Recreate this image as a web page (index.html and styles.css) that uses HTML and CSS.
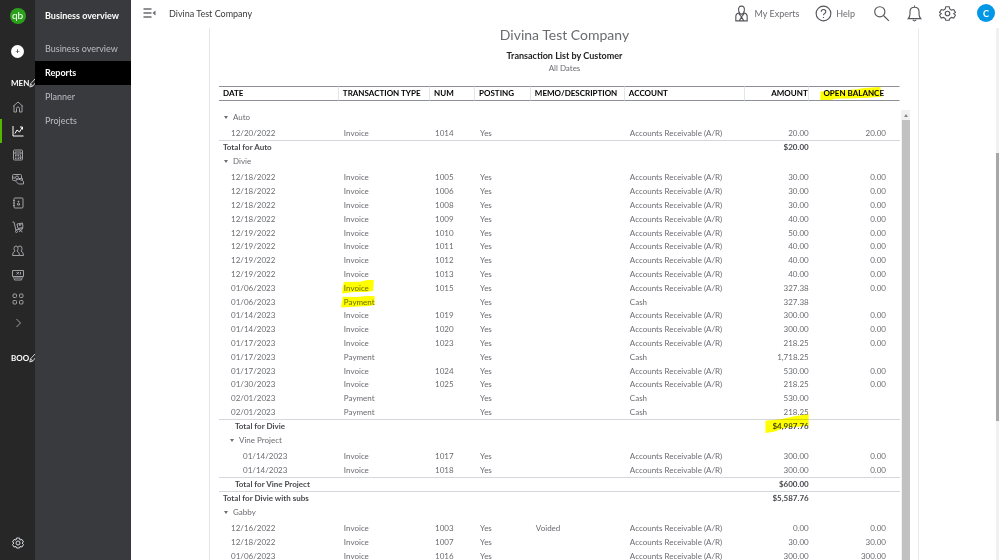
FILE: index.html
```html
<!DOCTYPE html>
<html lang="en">
<head>
    <meta charset="UTF-8">
    <meta name="viewport" content="width=device-width, initial-scale=1.0">
    <title>Transaction List by Customer</title>
    <link rel="stylesheet" href="styles.css">
</head>
<body>

    <nav class="rail" aria-label="Main">
        <a class="logo" href="#"><span>qb</span></a>
        <button class="new-button" type="button" aria-label="New"><span>+</span></button>
        <div class="rail-heading">MEN
            <svg class="pen" viewBox="0 0 20 24"><path d="M2 22l2-8L15 2q2-1 4 1t0 5L9 20zM4 14l5 6"/></svg>
        </div>
        <a class="rail-item" href="#" aria-label="Home">
            <svg viewBox="0 0 24 24"><path d="M2 11L12 2l10 9M4 9v13h5v-7q0-3 3-3t3 3v7h5V9"/></svg>
        </a>
        <a class="rail-item active" href="#" aria-label="Business overview">
            <svg viewBox="0 0 24 24"><path d="M2 2v20h21M6 17l4-7 5 4 6-10M16 4h5v5"/></svg>
        </a>
        <a class="rail-item" href="#" aria-label="Accounting">
            <svg viewBox="0 0 24 24"><rect x="3" y="2" width="18" height="20" rx="2"/><path d="M6 6h12v4H6zM6 13h3M11 13h3M16 13h2M6 16h3M11 16h3M16 16h2M6 19h3M11 19h3M16 15v4h2v-4"/></svg>
        </a>
        <a class="rail-item" href="#" aria-label="Transactions">
            <svg viewBox="0 0 24 24"><path d="M7 15H3q-2 0-2-2V5q0-2 2-2h14q2 0 2 2v5"/><circle cx="10" cy="9" r="3"/><path d="M4 7v5M8 14l4-2 9 3q2 1 2 3v4H13l-5-5zM14 11h7v4"/></svg>
        </a>
        <a class="rail-item" href="#" aria-label="Expenses">
            <svg viewBox="0 0 24 24"><rect x="4" y="2" width="18" height="20" rx="2"/><path d="M2 7h4M2 12h4M2 17h4M13 8v2M11 16q-1-4 2-4t2 4z"/><circle cx="13" cy="9" r="1"/></svg>
        </a>
        <a class="rail-item" href="#" aria-label="Commerce">
            <svg viewBox="0 0 24 24"><path d="M1 2h3l4 17M7 18l15-3M10 6l11-2 1 9-10 2zM15 5v4l3-1V5"/><circle cx="9" cy="21" r="2"/><path d="M14 17l7 5M21 16l-7 6"/></svg>
        </a>
        <a class="rail-item" href="#" aria-label="Customers">
            <svg viewBox="0 0 24 24"><path d="M4 7q0-5 4-5t4 5q0 3-2 5 5 2 5 9H1q0-7 5-9-2-2-2-5zM12 4q2-2 4-2 4 0 4 5 0 3-2 5 5 2 5 9h-8"/></svg>
        </a>
        <a class="rail-item" href="#" aria-label="Payroll">
            <svg viewBox="0 0 24 24"><path d="M1 15V3h22v12zM3 15l2 7h14l2-7M6 18h12"/><path d="M9 6l5 5M14 6l-5 5M17 6v5"/></svg>
        </a>
        <a class="rail-item" href="#" aria-label="Apps">
            <svg viewBox="0 0 24 24"><rect x="2" y="2" width="7" height="7" rx="2"/><rect x="15" y="2" width="7" height="7" rx="2"/><rect x="2" y="15" width="7" height="7" rx="2"/><rect x="15" y="15" width="7" height="7" rx="2"/></svg>
        </a>
        <a class="rail-item" href="#" aria-label="More">
            <svg viewBox="0 0 24 24"><path d="M9 4l8 8-8 8"/></svg>
        </a>
        <div class="rail-heading bookmarks">BOO
            <svg class="pen" viewBox="0 0 20 24"><path d="M2 22l2-8L15 2q2-1 4 1t0 5L9 20zM4 14l5 6"/></svg>
        </div>
        <a class="rail-item settings" href="#" aria-label="Menu settings">
            <svg viewBox="0 0 24 24"><path d="M9 2h6l1 4 4-1 3 5-3 2 3 3-3 5-4-1-1 3H9l-1-3-4 1-3-5 3-3-3-2 3-5 4 1z"/><circle cx="12" cy="12" r="4"/></svg>
        </a>
    </nav>

    <nav class="subnav" aria-label="Business overview">
        <h2>Business overview</h2>
        <a href="#">Business overview</a>
        <a class="current" href="#">Reports</a>
        <a href="#">Planner</a>
        <a href="#">Projects</a>
    </nav>

    <div class="page">
        <header class="topbar">
            <button class="menu-toggle" type="button" aria-label="Collapse menu">
                <svg viewBox="0 0 26 20"><path d="M1 2h16M1 10h16M1 18h16"/><path class="solid" d="M25 5v10l-6-5z"/></svg>
            </button>
            <span class="company">Divina Test Company</span>
            <div class="tools">
                <button class="experts" type="button">
                    <svg viewBox="0 0 24 30"><path d="M7 10q-1-8 5-8t5 8q-1 6-5 6t-5-6zM7 14q-5 1-5 6v8h20v-8q0-5-5-6M7 15l5 6 5-6M8 28l4-7 4 7"/></svg>
                    My Experts
                </button>
                <button class="help" type="button">
                    <svg viewBox="0 0 30 30"><circle cx="15" cy="15" r="13"/><path d="M11 12q0-4 4-4t4 4q0 2-2 3t-2 3M15 21v2"/></svg>
                    Help
                </button>
                <button type="button" aria-label="Search">
                    <svg viewBox="0 0 30 30"><circle cx="12" cy="12" r="9"/><path d="M19 19l9 9"/></svg>
                </button>
                <button type="button" aria-label="Notifications">
                    <svg viewBox="0 0 30 30"><path d="M4 24q3-3 3-8v-4q0-8 8-8t8 8v4q0 5 3 8zM15 1v3M12 26q3 4 6 0"/></svg>
                </button>
                <button type="button" aria-label="Settings">
                    <svg viewBox="0 0 30 30"><path d="M12 3h6l1 4 3 2 4-1 3 5-3 2 3 3-3 5-4-1-3 2-1 3h-6l-1-3-3-2-4 1-3-5 3-3-3-2 3-5 4 1 3-2z"/><circle cx="15" cy="15" r="4"/></svg>
                </button>
                <button class="avatar" type="button" aria-label="Account">C</button>
            </div>
        </header>

        <div class="content">
            <main class="report">
                <div class="report-title">
                    <h1>Divina Test Company</h1>
                    <h3>Transaction List by Customer</h3>
                    <p>All Dates</p>
                </div>

                <div class="table-area">
                    <table class="report-table">
                        <colgroup>
                            <col class="col-date">
                            <col class="col-type">
                            <col class="col-num">
                            <col class="col-posting">
                            <col class="col-memo">
                            <col class="col-account">
                            <col class="col-amount">
                            <col class="col-balance">
                        </colgroup>
                        <thead>
                            <tr>
                                <th>DATE</th>
                                <th>TRANSACTION TYPE</th>
                                <th>NUM</th>
                                <th>POSTING</th>
                                <th>MEMO/DESCRIPTION</th>
                                <th>ACCOUNT</th>
                                <th>AMOUNT</th>
                                <th><mark class="wide">OPEN BALANCE</mark></th>
                            </tr>
                        </thead>
                        <tbody>
                            <tr class="group"><td colspan="8"><span class="caret"></span>Auto</td></tr>
                            <tr><td>12/20/2022</td><td>Invoice</td><td>1014</td><td>Yes</td><td></td><td>Accounts Receivable (A/R)</td><td>20.00</td><td>20.00</td></tr>
                            <tr class="total"><td colspan="6">Total for Auto</td><td>$20.00</td><td></td></tr>
                        </tbody>
                        <tbody>
                            <tr class="group"><td colspan="8"><span class="caret"></span>Divie</td></tr>
                            <tr><td>12/18/2022</td><td>Invoice</td><td>1005</td><td>Yes</td><td></td><td>Accounts Receivable (A/R)</td><td>30.00</td><td>0.00</td></tr>
                            <tr><td>12/18/2022</td><td>Invoice</td><td>1006</td><td>Yes</td><td></td><td>Accounts Receivable (A/R)</td><td>30.00</td><td>0.00</td></tr>
                            <tr><td>12/18/2022</td><td>Invoice</td><td>1008</td><td>Yes</td><td></td><td>Accounts Receivable (A/R)</td><td>30.00</td><td>0.00</td></tr>
                            <tr><td>12/18/2022</td><td>Invoice</td><td>1009</td><td>Yes</td><td></td><td>Accounts Receivable (A/R)</td><td>40.00</td><td>0.00</td></tr>
                            <tr><td>12/19/2022</td><td>Invoice</td><td>1010</td><td>Yes</td><td></td><td>Accounts Receivable (A/R)</td><td>50.00</td><td>0.00</td></tr>
                            <tr><td>12/19/2022</td><td>Invoice</td><td>1011</td><td>Yes</td><td></td><td>Accounts Receivable (A/R)</td><td>40.00</td><td>0.00</td></tr>
                            <tr><td>12/19/2022</td><td>Invoice</td><td>1012</td><td>Yes</td><td></td><td>Accounts Receivable (A/R)</td><td>40.00</td><td>0.00</td></tr>
                            <tr><td>12/19/2022</td><td>Invoice</td><td>1013</td><td>Yes</td><td></td><td>Accounts Receivable (A/R)</td><td>40.00</td><td>0.00</td></tr>
                            <tr><td>01/06/2023</td><td><mark class="rising">Invoice</mark></td><td>1015</td><td>Yes</td><td></td><td>Accounts Receivable (A/R)</td><td>327.38</td><td>0.00</td></tr>
                            <tr><td>01/06/2023</td><td><mark>Payment</mark></td><td></td><td>Yes</td><td></td><td>Cash</td><td>327.38</td><td></td></tr>
                            <tr><td>01/14/2023</td><td>Invoice</td><td>1019</td><td>Yes</td><td></td><td>Accounts Receivable (A/R)</td><td>300.00</td><td>0.00</td></tr>
                            <tr><td>01/14/2023</td><td>Invoice</td><td>1020</td><td>Yes</td><td></td><td>Accounts Receivable (A/R)</td><td>300.00</td><td>0.00</td></tr>
                            <tr><td>01/17/2023</td><td>Invoice</td><td>1023</td><td>Yes</td><td></td><td>Accounts Receivable (A/R)</td><td>218.25</td><td>0.00</td></tr>
                            <tr><td>01/17/2023</td><td>Payment</td><td></td><td>Yes</td><td></td><td>Cash</td><td>1,718.25</td><td></td></tr>
                            <tr><td>01/17/2023</td><td>Invoice</td><td>1024</td><td>Yes</td><td></td><td>Accounts Receivable (A/R)</td><td>530.00</td><td>0.00</td></tr>
                            <tr><td>01/30/2023</td><td>Invoice</td><td>1025</td><td>Yes</td><td></td><td>Accounts Receivable (A/R)</td><td>218.25</td><td>0.00</td></tr>
                            <tr><td>02/01/2023</td><td>Payment</td><td></td><td>Yes</td><td></td><td>Cash</td><td>530.00</td><td></td></tr>
                            <tr><td>02/01/2023</td><td>Payment</td><td></td><td>Yes</td><td></td><td>Cash</td><td>218.25</td><td></td></tr>
                            <tr class="total nested"><td colspan="6">Total for Divie</td><td><mark class="sum">$4,987.76</mark></td><td></td></tr>
                        </tbody>
                        <tbody class="sub">
                            <tr class="group"><td colspan="8"><span class="caret"></span>Vine Project</td></tr>
                            <tr><td>01/14/2023</td><td>Invoice</td><td>1017</td><td>Yes</td><td></td><td>Accounts Receivable (A/R)</td><td>300.00</td><td>0.00</td></tr>
                            <tr><td>01/14/2023</td><td>Invoice</td><td>1018</td><td>Yes</td><td></td><td>Accounts Receivable (A/R)</td><td>300.00</td><td>0.00</td></tr>
                            <tr class="total nested"><td colspan="6">Total for Vine Project</td><td>$600.00</td><td></td></tr>
                        </tbody>
                        <tbody>
                            <tr class="total"><td colspan="6">Total for Divie with subs</td><td>$5,587.76</td><td></td></tr>
                        </tbody>
                        <tbody>
                            <tr class="group"><td colspan="8"><span class="caret"></span>Gabby</td></tr>
                            <tr><td>12/16/2022</td><td>Invoice</td><td>1003</td><td>Yes</td><td>Voided</td><td>Accounts Receivable (A/R)</td><td>0.00</td><td>0.00</td></tr>
                            <tr><td>12/18/2022</td><td>Invoice</td><td>1007</td><td>Yes</td><td></td><td>Accounts Receivable (A/R)</td><td>30.00</td><td>30.00</td></tr>
                            <tr><td>01/06/2023</td><td>Invoice</td><td>1016</td><td>Yes</td><td></td><td>Accounts Receivable (A/R)</td><td>300.00</td><td>300.00</td></tr>
                        </tbody>
                    </table>
                    <div class="table-scroll" aria-hidden="true">
                        <span class="arrow-up"></span>
                        <span class="thumb"></span>
                    </div>
                </div>
            </main>
            <div class="page-scroll" aria-hidden="true"><span></span></div>
        </div>
    </div>

</body>
</html>
```
FILE: styles.css
```css
* {
    box-sizing: border-box;
}

body {
    margin: 0;
    height: 100vh;
    display: flex;
    overflow: hidden;
    font-family: Lato, "Open Sans", sans-serif;
    font-size: 8px;
    color: #6b6c72;
    background-color: #fff;
}

a {
    color: inherit;
    text-decoration: none;
}

button {
    padding: 0;
    border: none;
    background: none;
    font: inherit;
    color: inherit;
    cursor: pointer;
}

svg {
    display: block;
    flex: none;
    fill: none;
    stroke: currentColor;
    stroke-width: 2;
}

/* Icon rail */
.rail {
    flex: none;
    width: 35px;
    display: flex;
    flex-direction: column;
    overflow: hidden;
    background-color: #272727;
    color: #a0a1a5;
}

.logo {
    height: 32px;
    display: flex;
    align-items: center;
    justify-content: center;
}

    .logo span {
        width: 16px;
        height: 16px;
        border-radius: 50%;
        background-color: #2ca01c;
        color: #fff;
        font-size: 10px;
        line-height: 14px;
        text-align: center;
    }

.new-button {
    height: 39px;
    display: flex;
    align-items: center;
    justify-content: center;
}

    .new-button span {
        width: 13px;
        height: 13px;
        border-radius: 50%;
        background-color: #fff;
        color: #393a3d;
        font-weight: bold;
        line-height: 12px;
    }

.rail-heading {
    height: 24px;
    padding-left: 11px;
    display: flex;
    align-items: center;
    color: #fff;
    font-weight: bold;
}

.bookmarks {
    margin-top: 11px;
}

.pen {
    width: 8px;
    height: 10px;
}

.rail-item {
    height: 24px;
    display: flex;
    align-items: center;
    justify-content: center;
    border-left: 2px solid transparent;
    border-right: 2px solid transparent;
}

    .rail-item svg {
        width: 12px;
        height: 12px;
    }

    .rail-item.active {
        border-left-color: #53b700;
        color: #fff;
    }

    .rail-item.settings {
        margin-top: auto;
        margin-bottom: 5px;
        color: #d4d7dc;
    }

/* Second level menu */
.subnav {
    flex: none;
    width: 96px;
    background-color: #393a3d;
    color: #babec5;
    font-size: 9px;
}

    .subnav h2 {
        margin: 0 0 6px;
        padding-left: 10px;
        font-size: 9px;
        line-height: 31px;
        color: #fff;
    }

    .subnav a {
        display: block;
        padding-left: 10px;
        line-height: 24px;
    }

    .subnav .current {
        background-color: #000;
        color: #fff;
        font-weight: bold;
    }

.page {
    flex: 1;
    min-width: 0;
    display: flex;
    flex-direction: column;
}

/* Top bar */
.topbar {
    flex: none;
    height: 28px;
    padding: 0 4px 2px 12px;
    display: flex;
    align-items: center;
    font-size: 9px;
}

.menu-toggle svg {
    width: 13px;
    height: 10px;
    stroke-width: 3;
}

.solid {
    fill: currentColor;
    stroke: none;
}

.company {
    margin-left: 13px;
    color: #393a3d;
}

.tools {
    margin-left: auto;
    display: flex;
    align-items: center;
    gap: 16px;
}

    .tools button {
        display: flex;
        align-items: center;
        gap: 4px;
    }

    .tools svg {
        width: 17px;
        height: 17px;
        color: #55565b;
    }

    .tools .help {
        margin-right: 2px;
    }

    .tools .avatar {
        width: 18px;
        height: 18px;
        margin-left: 5px;
        justify-content: center;
        border-radius: 50%;
        background-color: #0097e6;
        color: #fff;
        font-weight: bold;
    }

/* Report */
.content {
    flex: 1;
    min-height: 0;
    display: flex;
}

.report {
    flex: 1;
    margin: 0 77px 0 78px;
    padding: 0 8px 0 9px;
    display: flex;
    flex-direction: column;
    border-left: 1px solid #e3e5ee;
    border-right: 1px solid #e9eaed;
}

.report-title {
    flex: none;
    height: 58px;
    text-align: center;
}

    .report-title h1 {
        margin: 0 0 9px;
        font-size: 14px;
        font-weight: normal;
        line-height: 13px;
    }

    .report-title h3 {
        margin: 0;
        font-size: 9px;
        line-height: 12px;
        color: #222;
    }

    .report-title p {
        margin: 0;
        line-height: 12px;
    }

.table-area {
    flex: 1;
    min-height: 0;
    display: flex;
    align-items: flex-start;
    gap: 1px;
    overflow: hidden;
}

.report-table {
    flex: 1;
    table-layout: fixed;
    border-spacing: 0;
    line-height: 13px;
}

.col-date {
    width: 17.6%;
}

.col-type {
    width: 13.4%;
}

.col-num {
    width: 6.6%;
}

.col-posting {
    width: 8.2%;
}

.col-memo {
    width: 13.8%;
}

.col-account {
    width: 17.7%;
}

.col-amount {
    width: 9.3%;
}

.col-balance {
    width: 13.4%;
}

.report-table th {
    height: 15px;
    padding: 0 0 0 4px;
    border-top: 1px solid #8d9096;
    border-bottom: 1px solid #8d9096;
    border-right: 1px solid #e3e5e8;
    color: #000;
    text-align: left;
    white-space: nowrap;
}

    .report-table th:nth-child(n+7) {
        text-align: right;
    }

    .report-table th:last-child {
        padding-right: 15px;
        border-right-color: transparent;
    }

.report-table td {
    height: 14px;
    padding: 0 0 0 5px;
    white-space: nowrap;
}

.report-table tr:nth-child(5n+2) td {
    height: 13px;
}

.report-table tbody td:first-child {
    padding-left: 12px;
}

.report-table td:nth-child(7) {
    text-align: right;
}

.report-table td:nth-child(8) {
    padding-right: 14px;
    text-align: right;
}

.report-table tbody .group td {
    height: 17px;
    padding-top: 1px;
    padding-left: 5px;
    vertical-align: top;
}

.report-table thead + tbody .group td {
    height: 26px;
    padding-top: 10px;
}

.report-table .sub td:first-child {
    padding-left: 24px;
}

.report-table .sub .group td {
    padding-left: 11px;
}

.report-table tbody .total td {
    height: 14px;
    padding-left: 4px;
    border-top: 1px solid #d4d7dc;
    color: #4a4b50;
    font-weight: bold;
}

.report-table tbody .nested td:first-child {
    padding-left: 16px;
}

.total td:nth-child(2) {
    text-align: right;
}

.caret {
    display: inline-block;
    margin-right: 5px;
    border: 2px solid transparent;
    border-top: 3px solid #6b6c72;
    border-bottom: none;
    vertical-align: 1px;
}

/* Highlighter strokes */
mark {
    position: relative;
    background: none;
    color: inherit;
}

    mark::before {
        content: "";
        position: absolute;
        inset: -1px 0 -1px -3px;
        background-color: #ff0;
        mix-blend-mode: multiply;
        clip-path: polygon(6% 10%, 50% 12%, 75% 4%, 100% 0, 100% 80%, 85% 88%, 40% 94%, 0 100%);
    }

    mark.rising::before {
        inset: -3px -5px -1px -2px;
        clip-path: polygon(6% 18%, 55% 16%, 80% 4%, 100% 0, 98% 80%, 75% 90%, 40% 90%, 0 100%);
    }

    mark.wide::before {
        inset: -1px 1px -2px -3px;
        clip-path: polygon(0 34%, 55% 20%, 70% 8%, 96% 0, 98% 75%, 70% 85%, 22% 90%, 20% 98%, 0 100%);
    }

    mark.sum::before {
        inset: -7px 0 -2px -7px;
        clip-path: polygon(0 36%, 35% 28%, 70% 10%, 100% 0, 100% 62%, 45% 72%, 20% 94%, 0 100%);
    }

/* Scrollbars */
.table-scroll {
    align-self: stretch;
    width: 9px;
    margin-top: 24px;
    display: flex;
    flex-direction: column;
    align-items: center;
    background-color: #f1f1f1;
}

.arrow-up {
    margin: 4px 0 3px;
    border: 2px solid transparent;
    border-top: none;
    border-bottom: 3px solid #85868a;
}

.thumb {
    flex: 1;
    width: 8px;
    background-color: #c1c1c1;
}

.page-scroll {
    width: 3px;
    display: grid;
    grid-template-rows: 125fr 268fr 139fr;
    background-color: #f1f1f1;
}

    .page-scroll span {
        grid-row: 2;
        background-color: #a8a8a8;
    }
```
